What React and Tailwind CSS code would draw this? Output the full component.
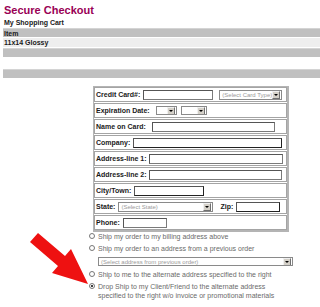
import React from 'react';

const DropButton = () => (
  <div className="ml-auto flex h-[8px] w-[8px] shrink-0 items-center justify-center border border-t-[#f0f0f0] border-l-[#f0f0f0] border-r-[#707070] border-b-[#707070] bg-[#d4d0c8]">
    <div className="h-0 w-0 border-l-[2px] border-r-[2px] border-t-[2px] border-l-transparent border-r-transparent border-t-black" />
  </div>
);

const Select = ({ text = '', className = '' }) => (
  <div className={`flex shrink-0 items-center overflow-hidden border border-[#8a8a8a] bg-white pl-[2px] pr-px text-[6px] leading-none text-[#9a9a9a] ${className}`}>
    <span className="whitespace-nowrap">{text}</span>
    <DropButton />
  </div>
);

const Input = ({ className = '' }) => (
  <div className={`h-[10px] shrink-0 border border-[#7a7a7a] border-t-[#555] border-l-[#555] bg-white ${className}`} />
);

const Row = ({ label, children }) => (
  <div className="flex h-[15px] items-center border border-[#a4a4a4] pl-[1px] pr-[2px]">
    <span className="shrink-0 whitespace-nowrap text-[7px] font-bold leading-none text-[#1a1a1a]">{label}</span>
    {children}
  </div>
);

const Radio = ({ checked }) => (
  <div className="mt-[1px] flex h-[6px] w-[6px] shrink-0 items-center justify-center rounded-full border border-[#777] bg-white">
    {checked && <div className="h-[2px] w-[2px] rounded-full bg-black" />}
  </div>
);

export default function App() {
  return (
    <div className="relative h-[307px] w-[320px] overflow-hidden bg-white font-['Liberation_Sans',Arial,sans-serif]">
      <h1 className="whitespace-nowrap pl-[4px] pt-[4px] text-[11px] font-bold leading-[13px] text-[#990055]">Secure Checkout</h1>
      <p className="mt-[2px] whitespace-nowrap pl-[4px] text-[7px] font-bold leading-[8px] text-[#1a1a1a]">My Shopping Cart</p>

      {/* cart table */}
      <div className="ml-[3px] mt-[1px] flex flex-col text-[7px] font-bold leading-none text-[#1a1a1a]">
        <div className="flex h-[9px] items-center border-t border-[#d4d4d4] bg-[#c0c0c0] pl-px">Item</div>
        <div className="mt-px flex h-[9px] items-center bg-[#eeeeee] pl-px">11x14 Glossy</div>
        <div className="mt-px h-[9px] border-t border-[#d4d4d4] bg-[#c0c0c0]" />
        <div className="h-[12px]" />
        <div className="h-[9px] border-t border-[#d4d4d4] bg-[#c0c0c0]" />
      </div>

      {/* payment form */}
      <div className="ml-[93px] mt-[8px] flex w-[196px] flex-col gap-px border border-r-2 border-b-2 border-[#b4b4b4]">
        <Row label="Credit Card#:">
          <Input className="ml-[3px] w-[70px]" />
          <Select text="(Select Card Type)" className="ml-[6px] h-[10px] w-[63px]" />
        </Row>
        <Row label="Expiration Date:">
          <Select className="ml-[6px] h-[9px] w-[21px]" />
          <Select className="ml-[4px] h-[9px] w-[26px]" />
        </Row>
        <Row label="Name on Card:">
          <Input className="ml-[6px] w-[123px]" />
        </Row>
        <Row label="Company:">
          <Input className="ml-[3px] w-[149px] border-[#222]" />
        </Row>
        <Row label="Address-line 1:">
          <Input className="ml-[2px] w-[134px]" />
        </Row>
        <Row label="Address-line 2:">
          <Input className="ml-[2px] w-[133px]" />
        </Row>
        <Row label="City/Town:">
          <Input className="ml-[3px] w-[70px] border-[#222]" />
        </Row>
        <Row label="State:">
          <Select text="(Select State)" className="ml-[3px] h-[10px] w-[95px]" />
          <span className="ml-[7px] shrink-0 whitespace-nowrap text-[7px] font-bold leading-none text-[#1a1a1a]">Zip:</span>
          <Input className="ml-[3px] w-[44px] border-[#222]" />
        </Row>
        <Row label="Phone:">
          <Input className="ml-[3px] w-[44px]" />
        </Row>
      </div>

      {/* shipping options */}
      <div className="ml-[89px] flex flex-col whitespace-nowrap text-[7px] leading-[9px] text-[#6a6a6a]">
        <div className="flex gap-[3px]">
          <Radio />
          <span>Ship my order to my billing address above</span>
        </div>
        <div className="mt-[3px] flex gap-[3px]">
          <Radio />
          <span>Ship my order to an address from a previous order</span>
        </div>
        <Select text="(Select address from previous order)" className="ml-[9px] mt-[4px] h-[9px] w-[195px]" />
        <div className="mt-[4px] flex gap-[3px]">
          <Radio />
          <span>Ship to me to the alternate address specified to the right</span>
        </div>
        <div className="mt-[3px] flex gap-[3px]">
          <Radio checked />
          <span>
            Drop Ship to my Client/Friend to the alternate address
            <br />
            specified to the right w/o invoice or promotional materials
          </span>
        </div>
      </div>

      {/* red pointer arrow */}
      <svg className="pointer-events-none absolute left-0 top-0" width="320" height="307" viewBox="0 0 320 307">
        <polygon
          points="38,233 65,256 71,249 88,284 52,273 58,266 30,242"
          fill="#ee1111"
        />
      </svg>
    </div>
  );
}
